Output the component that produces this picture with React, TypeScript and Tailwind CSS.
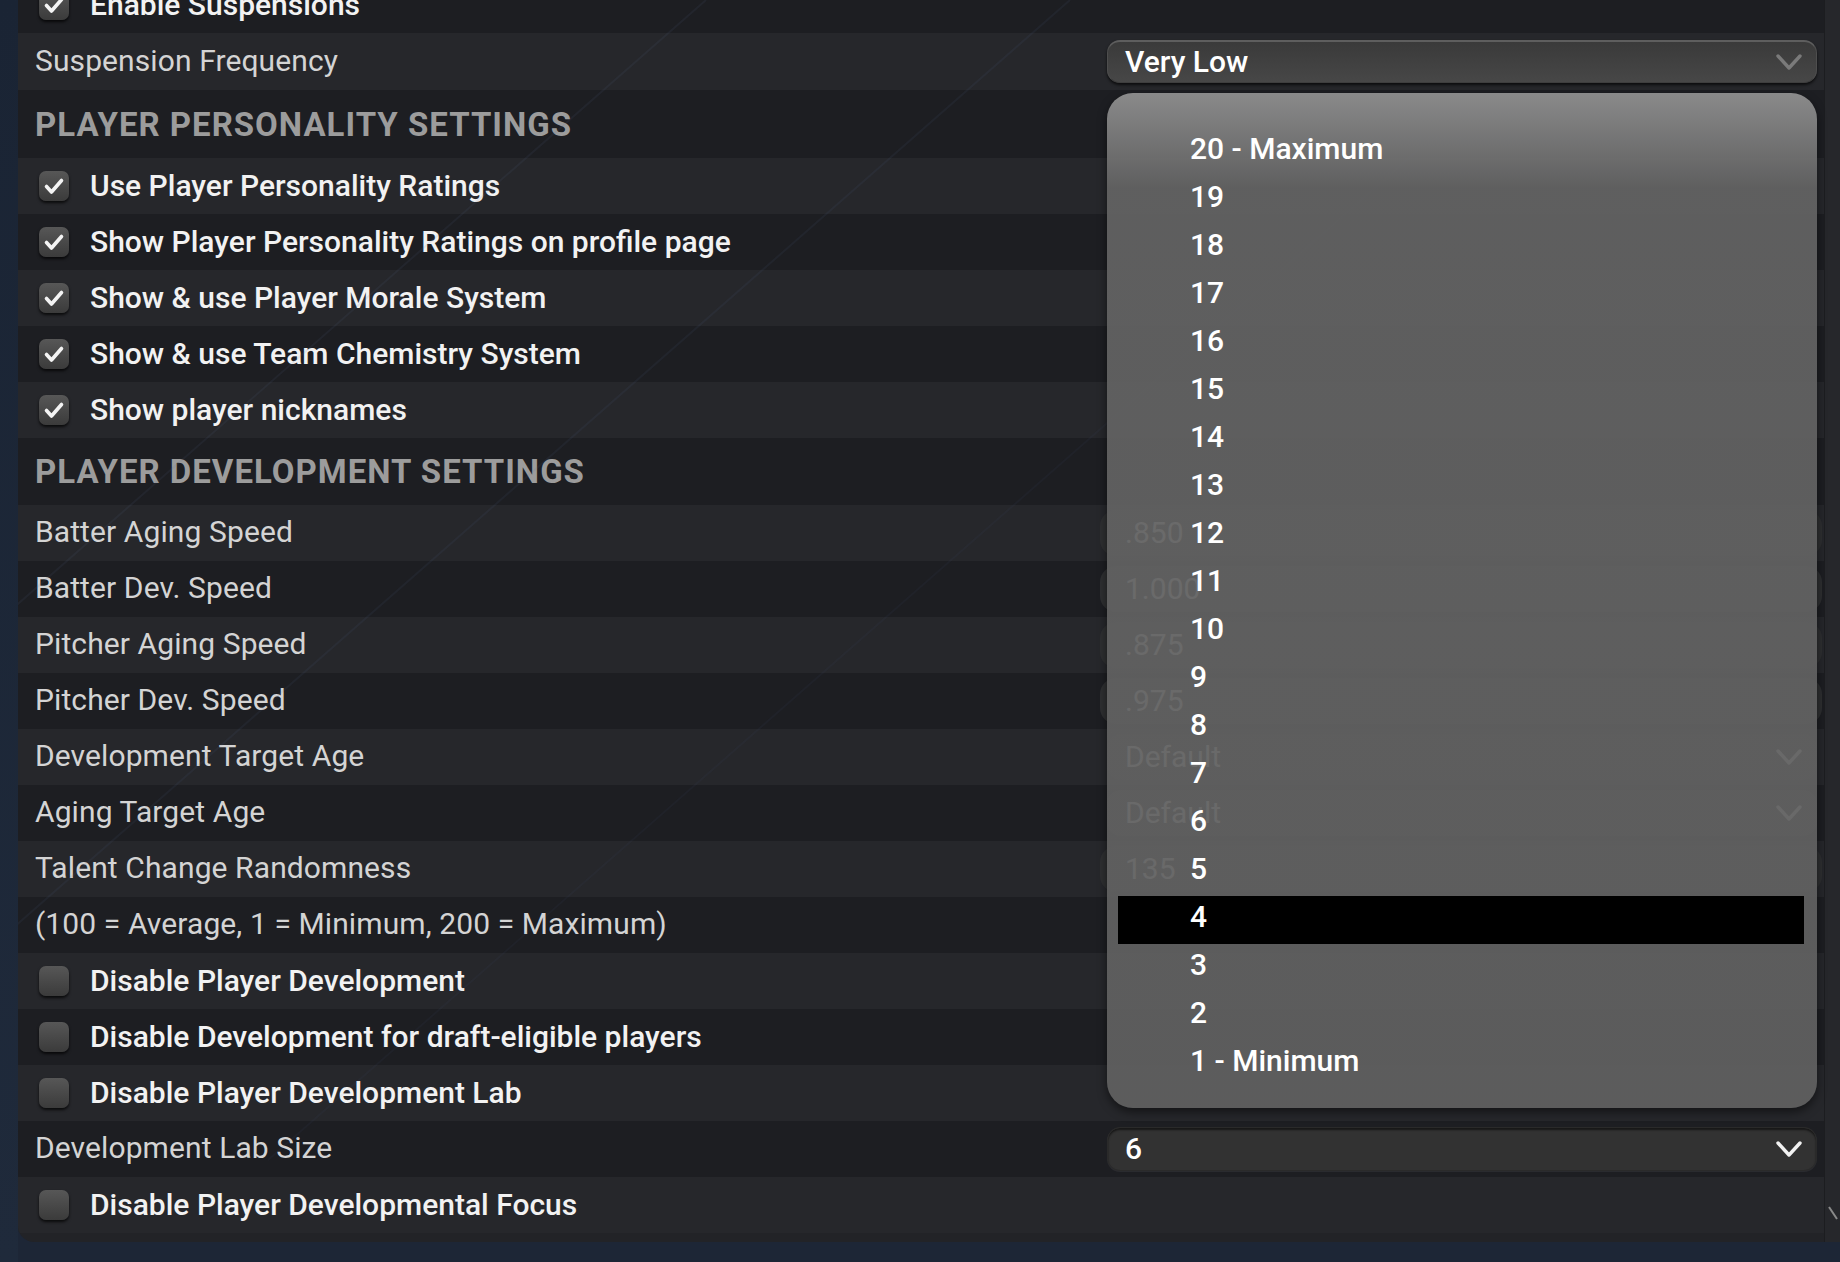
import React from "react";

const DARK = "bg-[#1d1e22]";
const LIGHT = "bg-[#26272b]";

function Chevron({ color }: { color: string }) {
  return (
    <svg width="26" height="18" viewBox="0 0 26 18" className="shrink-0">
      <polyline points="2,3 13,15 24,3" fill="none" stroke={color} strokeWidth="3.4" strokeLinecap="round" strokeLinejoin="round" />
    </svg>
  );
}

function CheckBox({ checked }: { checked: boolean }) {
  return (
    <div className="w-[30px] h-[30px] shrink-0 rounded-[7px] bg-gradient-to-b from-[#575757] to-[#3b3b3b] shadow-[0_2px_3px_rgba(0,0,0,0.75)] flex items-center justify-center">
      {checked && (
        <svg width="30" height="30" viewBox="0 0 30 30">
          <polyline points="7.5,15.5 12.5,21 22.5,9.5" fill="none" stroke="#f4f4f4" strokeWidth="3.6" strokeLinecap="round" strokeLinejoin="round" />
        </svg>
      )}
    </div>
  );
}

function Header({ text, h }: { text: string; h: string }) {
  return (
    <div className={`${DARK} ${h} flex items-center pl-[17px] shrink-0`}>
      <span className="text-[33px] font-bold tracking-[1px] text-[#9c9c9c] leading-none">{text}</span>
    </div>
  );
}

function CheckRow({ text, checked, tone }: { text: string; checked: boolean; tone: string }) {
  return (
    <div className={`${tone} h-[56px] flex items-center pl-[21px] gap-[21px] shrink-0`}>
      <CheckBox checked={checked} />
      <span className="text-[30px] font-medium text-[#f2f2f2] leading-none -mt-[1px]">{text}</span>
    </div>
  );
}

function LabelRow({ text, tone, h = "h-[56px]", children }: { text: string; tone: string; h?: string; children?: React.ReactNode }) {
  return (
    <div className={`${tone} ${h} flex items-center justify-between pl-[17px] shrink-0`}>
      <span className="text-[30px] text-[#d4d4d4] tracking-[0.1px] leading-none -mt-[2px]">{text}</span>
      {children}
    </div>
  );
}

function TextInput({ value }: { value: string }) {
  return (
    <div className="w-[722px] h-[46px] mr-[2px] rounded-[16px] bg-[#2e2f31] flex items-center pl-[25px]">
      <span className="text-[30px] text-[#d8d8d8] leading-none">{value}</span>
    </div>
  );
}

function GhostSelect({ value }: { value: string }) {
  return (
    <div className="w-[710px] h-[46px] mr-[7px] rounded-[14px] bg-[#2f2f31] flex items-center justify-between pl-[18px] pr-[15px]">
      <span className="text-[30px] text-[#d8d8d8] leading-none">{value}</span>
      <Chevron color="#d0d0d0" />
    </div>
  );
}

export default function App() {
  const items = ["20 - Maximum", "19", "18", "17", "16", "15", "14", "13", "12", "11", "10", "9", "8", "7", "6", "5", "4", "3", "2", "1 - Minimum"];
  return (
    <div className="relative w-[1840px] h-[1262px] overflow-hidden bg-[#1d2636] [font-family:Roboto,sans-serif]">
      <div className="flex h-full">
        <div className="w-[18px] shrink-0 bg-gradient-to-b from-[#1a2434] to-[#1f2a3b]" />
        <div className="flex-1 flex flex-col">
          <div className="h-[1242px] shrink-0 bg-[#222327] rounded-bl-[16px] overflow-hidden flex relative">
            <div className="flex-1 flex flex-col -mt-[23px]">
              <CheckRow text="Enable Suspensions" checked tone={DARK} />
              <LabelRow text="Suspension Frequency" tone={LIGHT} h="h-[57px]">
                <div className="w-[710px] h-[43px] mr-[7px] rounded-[13px] bg-gradient-to-b from-[#3a3a3a] to-[#474747] border-t-[2px] border-x border-b border-t-[#5e5e5e] border-x-[#4e4e4e] border-b-[#3e3e3e] shadow-[0_2px_3px_rgba(0,0,0,0.7)] flex items-center justify-between pl-[17px] pr-[14px]">
                  <span className="text-[30px] font-medium text-white leading-none">Very Low</span>
                  <Chevron color="#7a7a7a" />
                </div>
              </LabelRow>
              <Header text="PLAYER PERSONALITY SETTINGS" h="h-[68px]" />
              <CheckRow text="Use Player Personality Ratings" checked tone={LIGHT} />
              <CheckRow text="Show Player Personality Ratings on profile page" checked tone={DARK} />
              <CheckRow text="Show & use Player Morale System" checked tone={LIGHT} />
              <CheckRow text="Show & use Team Chemistry System" checked tone={DARK} />
              <CheckRow text="Show player nicknames" checked tone={LIGHT} />
              <Header text="PLAYER DEVELOPMENT SETTINGS" h="h-[67px]" />
              <LabelRow text="Batter Aging Speed" tone={LIGHT}><TextInput value=".850" /></LabelRow>
              <LabelRow text="Batter Dev. Speed" tone={DARK}><TextInput value="1.000" /></LabelRow>
              <LabelRow text="Pitcher Aging Speed" tone={LIGHT}><TextInput value=".875" /></LabelRow>
              <LabelRow text="Pitcher Dev. Speed" tone={DARK}><TextInput value=".975" /></LabelRow>
              <LabelRow text="Development Target Age" tone={LIGHT}><GhostSelect value="Default" /></LabelRow>
              <LabelRow text="Aging Target Age" tone={DARK}><GhostSelect value="Default" /></LabelRow>
              <LabelRow text="Talent Change Randomness" tone={LIGHT}><TextInput value="135" /></LabelRow>
              <LabelRow text="(100 = Average, 1 = Minimum, 200 = Maximum)" tone={DARK} />
              <CheckRow text="Disable Player Development" checked={false} tone={LIGHT} />
              <CheckRow text="Disable Development for draft-eligible players" checked={false} tone={DARK} />
              <CheckRow text="Disable Player Development Lab" checked={false} tone={LIGHT} />
              <LabelRow text="Development Lab Size" tone={DARK}>
                <div className="w-[710px] h-[44px] mr-[7px] rounded-[13px] bg-[#323232] border border-[#2a2a2a] shadow-[inset_0_2px_2px_rgba(0,0,0,0.55),0_1px_0_rgba(255,255,255,0.06)] flex items-center justify-between pl-[17px] pr-[14px]">
                  <span className="text-[30px] font-medium text-white leading-none">6</span>
                  <Chevron color="#f2f2f2" />
                </div>
              </LabelRow>
              <CheckRow text="Disable Player Developmental Focus" checked={false} tone={LIGHT} />
            </div>
            <div className="w-[16px] shrink-0 bg-[#26272b] border-l border-[#1c1d20] flex flex-col justify-end items-center pb-[22px]">
              <svg width="10" height="14" viewBox="0 0 10 14">
                <line x1="1" y1="1" x2="9" y2="13" stroke="#8a8a8a" strokeWidth="2" />
              </svg>
            </div>
            <svg className="absolute inset-0 pointer-events-none" width="1822" height="1242">
              <line x1="688" y1="0" x2="-400" y2="955" stroke="rgba(90,110,150,0.10)" strokeWidth="2" />
              <line x1="1052" y1="0" x2="-30" y2="950" stroke="rgba(90,110,150,0.09)" strokeWidth="2" />
              <line x1="1400" y1="150" x2="250" y2="1160" stroke="rgba(90,110,150,0.06)" strokeWidth="2" />
            </svg>
          </div>
        </div>
      </div>

      <div className="absolute left-[1107px] top-[93px] w-[710px] h-[1015px] rounded-[26px] bg-[linear-gradient(to_bottom,rgba(146,146,146,0.93)_0px,rgba(99,99,99,0.93)_95px,rgba(96,96,96,0.93)_100%)] shadow-[0_4px_10px_rgba(0,0,0,0.5)] pt-[35px] pl-[11px] pr-[13px]">
        {items.map((it) => (
          <div key={it} className={`h-[48px] flex items-center pl-[72px] ${it === "4" ? "bg-black" : ""}`}>
            <span className="text-[30px] font-medium text-white leading-none -mt-[6px]">{it}</span>
          </div>
        ))}
      </div>
    </div>
  );
}
